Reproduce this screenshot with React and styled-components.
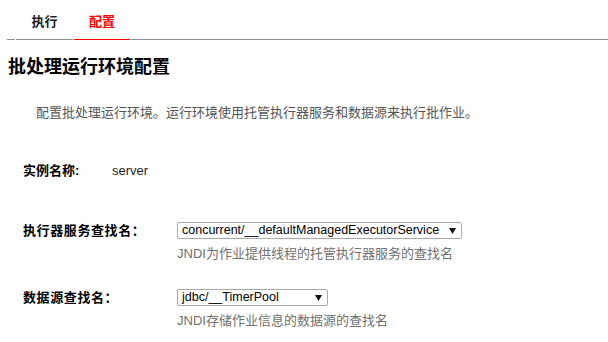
import React from "react";
import styled, { createGlobalStyle } from "styled-components";

const GlobalStyle = createGlobalStyle`
  html, body {
    margin: 0;
    padding: 0;
    background: #ffffff;
    font-family: "Liberation Sans", "Noto Sans CJK SC", sans-serif;
    color: #000;
  }
`;

const Page = styled.div`
  width: 608px;
  height: 342px;
  overflow: hidden;
`;

const TabBar = styled.div`
  display: flex;
  gap: 1px;
  padding-left: 7px;
  height: 40px;
`;

const TabSpacer = styled.div`
  width: ${(p) => p.width || "8px"};
  flex: ${(p) => (p.grow ? 1 : "none")};
  border-bottom: 1px solid #8b9095;
`;

const Tab = styled.div`
  width: ${(p) => p.width};
  box-sizing: border-box;
  padding-top: 14px;
  text-align: center;
  font-size: 13px;
  line-height: 16px;
  font-weight: bold;
  color: ${(p) => (p.active ? "#ff0000" : "#222")};
  border-bottom: 1px solid ${(p) => (p.active ? "#ff0000" : "#8b9095")};
`;

const Title = styled.h1`
  margin: 14px 0 0 8px;
  font-size: 18px;
  line-height: 26px;
  font-weight: bold;
`;

const Description = styled.p`
  margin: 23px 0 0 36px;
  font-size: 13px;
  line-height: 20px;
  color: #555;
`;

const InfoRow = styled.div`
  display: flex;
  margin: 38px 0 0 23px;
  font-size: 13px;
  line-height: 20px;
`;

const InfoLabel = styled.div`
  width: 89px;
  font-weight: bold;
`;

const InfoValue = styled.div`
  color: #222;
`;

const FieldRow = styled.div`
  display: flex;
  margin: ${(p) => p.top} 0 0 23px;
`;

const FieldLabel = styled.div`
  width: 154px;
  font-size: 13px;
  line-height: 15px;
  padding-top: 1px;
  font-weight: bold;
  letter-spacing: 0.6px;
`;

const FieldBody = styled.div`
  display: flex;
  flex-direction: column;
`;

const SelectBox = styled.div`
  box-sizing: border-box;
  width: ${(p) => p.width};
  height: 17px;
  border: 1px solid #a9a9a9;
  border-radius: 2px;
  display: flex;
  align-items: center;
  justify-content: space-between;
  padding: 0 5px 0 4px;
  font-size: 12.5px;
  line-height: 15px;
  color: #000;
  white-space: nowrap;
`;

const Help = styled.div`
  margin-top: 6px;
  font-size: 13px;
  line-height: 18px;
  color: #707070;
`;

const Arrow = () => (
  <svg width="7" height="6" viewBox="0 0 7 6">
    <path d="M0 0 L7 0 L3.5 6 Z" fill="#111" />
  </svg>
);

export default function App() {
  return (
    <Page>
      <GlobalStyle />
      <TabBar>
        <TabSpacer width="8px" />
        <Tab width="57px">执行</Tab>
        <Tab width="56px" active>
          配置
        </Tab>
        <TabSpacer grow />
      </TabBar>
      <Title>批处理运行环境配置</Title>
      <Description>
        配置批处理运行环境。运行环境使用托管执行器服务和数据源来执行批作业。
      </Description>
      <InfoRow>
        <InfoLabel>实例名称:</InfoLabel>
        <InfoValue>server</InfoValue>
      </InfoRow>
      <FieldRow top="41px">
        <FieldLabel>执行器服务查找名：</FieldLabel>
        <FieldBody>
          <SelectBox width="285px">
            <span>concurrent/__defaultManagedExecutorService</span>
            <Arrow />
          </SelectBox>
          <Help>JNDI为作业提供线程的托管执行器服务的查找名</Help>
        </FieldBody>
      </FieldRow>
      <FieldRow top="26px">
        <FieldLabel>数据源查找名：</FieldLabel>
        <FieldBody>
          <SelectBox width="151px">
            <span>jdbc/__TimerPool</span>
            <Arrow />
          </SelectBox>
          <Help>JNDI存储作业信息的数据源的查找名</Help>
        </FieldBody>
      </FieldRow>
    </Page>
  );
}
